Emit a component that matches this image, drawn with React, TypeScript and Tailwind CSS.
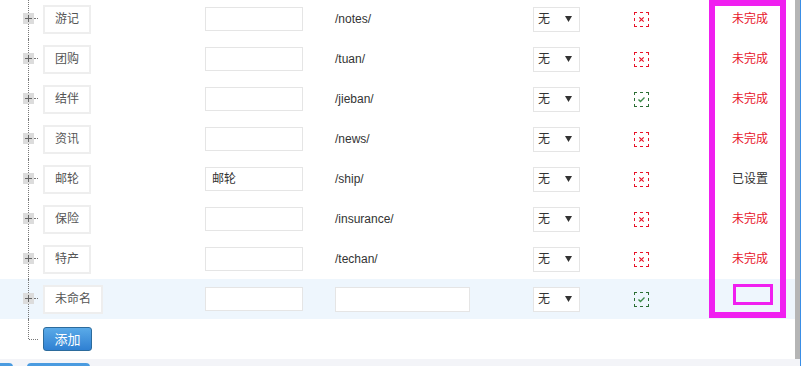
const rows = [
  { name: "游记", title: "", url: "/notes/", ok: false, status: "未完成" },
  { name: "团购", title: "", url: "/tuan/", ok: false, status: "未完成" },
  { name: "结伴", title: "", url: "/jieban/", ok: true, status: "未完成" },
  { name: "资讯", title: "", url: "/news/", ok: false, status: "未完成" },
  { name: "邮轮", title: "邮轮", url: "/ship/", ok: false, status: "已设置" },
  { name: "保险", title: "", url: "/insurance/", ok: false, status: "未完成" },
  { name: "特产", title: "", url: "/techan/", ok: false, status: "未完成" },
  { name: "未命名", title: "", url: null, ok: true, status: "" },
]

function PlusIcon() {
  return (
    <svg width="11" height="11" viewBox="0 0 11 11" className="block">
      <rect width="11" height="11" fill="#dcdcdc" />
      <path d="M2 5.5h7M5.5 2v7" stroke="#666" strokeWidth="1" />
    </svg>
  )
}

// dashed 15px box: corner pieces plus one dash in the middle of each side
const dashes =
  "M0 0.5h3M6 0.5h3M12 0.5h3M0 14.5h3M6 14.5h3M12 14.5h3" +
  "M0.5 0v3M0.5 6v3M0.5 12v3M14.5 0v3M14.5 6v3M14.5 12v3"

function Mark({ ok }: { ok: boolean }) {
  const c = ok ? "#2c6e35" : "#e8142a"
  return (
    <svg width="15" height="15" viewBox="0 0 15 15" className="block">
      <path d={dashes} stroke={c} strokeWidth="1" fill="none" />
      {ok ? (
        <path d="M4.5 7.5l2 2 4-4" fill="none" stroke="#3a8a48" strokeWidth="1.4" />
      ) : (
        <path d="M5.3 5.3l4.4 4.4M9.7 5.3l-4.4 4.4" stroke={c} strokeWidth="1.2" />
      )}
    </svg>
  )
}

function Select() {
  return (
    <div className="w-[47px] h-[25px] border border-[#e5e5e5] bg-white flex items-center justify-between pl-[4px] pr-[7px]">
      <span className="text-[12px] text-[#333]">无</span>
      <svg width="7" height="6" viewBox="0 0 7 6">
        <path d="M0 0h7L3.5 6z" fill="#333" />
      </svg>
    </div>
  )
}

function TreeCell({ last }: { last?: boolean }) {
  return (
    <div className="relative w-[43px] h-full shrink-0">
      <div
        className={
          "absolute left-[28px] top-0 w-0 border-l border-dotted border-[#777] " +
          (last ? "h-[20px]" : "h-full")
        }
      />
      {last ? (
        <div className="absolute left-[29px] top-[20px] w-[9px] border-t border-dotted border-[#777]" />
      ) : (
        <>
          <div className="absolute left-[34px] top-[19px] w-[4px] border-t border-dotted border-[#777]" />
          <div className="absolute left-[23px] top-[14px]">
            <PlusIcon />
          </div>
        </>
      )}
    </div>
  )
}

export default function App() {
  return (
    <div className="relative w-[801px] h-[366px] overflow-hidden flex bg-white font-['Liberation_Sans','Noto_Sans_CJK_SC',sans-serif]">
      <div className="w-[800px] flex flex-col">
        <div className="h-[359px] flex">
          <div className="w-[795px] bg-white overflow-hidden">
            <div className="-mt-px">
              {rows.map((r, i) => {
                const edit = r.url === null
                return (
                  <div key={i} className={"h-[40px] flex items-center " + (edit ? "bg-[#eef6fd]" : "")}>
                    <TreeCell />
                    <div className="w-[162px] shrink-0">
                      <div className="inline-flex h-[29px] items-center px-[10px] border-2 border-[#eeeeee] bg-white text-[12px] text-[#555]">
                        {r.name}
                      </div>
                    </div>
                    <div className="w-[130px] shrink-0">
                      <div className="w-[98px] h-[24px] border border-[#e5e5e5] bg-white flex items-center px-[6px] text-[12px] text-[#333]">
                        {r.title}
                      </div>
                    </div>
                    <div className="w-[198px] shrink-0 text-[12px] text-[#333]">
                      {edit ? (
                        <div className="w-[135px] h-[25px] border border-[#e5e5e5] bg-white" />
                      ) : (
                        r.url
                      )}
                    </div>
                    <div className="w-[101px] shrink-0">
                      <Select />
                    </div>
                    <div className="w-[81px] shrink-0">
                      <Mark ok={r.ok} />
                    </div>
                    <div
                      className={
                        "w-[70px] shrink-0 text-center text-[12px] " +
                        (r.status === "已设置" ? "text-[#333]" : "text-[#e8142a]")
                      }
                    >
                      {r.status}
                    </div>
                  </div>
                )
              })}
              <div className="h-[40px] flex items-center">
                <TreeCell last />
                <button className="w-[49px] h-[24px] rounded-[3px] border border-[#2c6b9c] bg-linear-to-b from-[#5aaae8] to-[#2f80d2] text-white text-[13px] leading-none">
                  添加
                </button>
              </div>
            </div>
          </div>
          <div className="w-[5px] bg-[#b5b5b5]" />
        </div>
        <div className="relative h-[7px] bg-[#f3f4f8] overflow-hidden">
          <div className="absolute left-0 top-[4px] w-[13px] h-[10px] rounded-tr-[4px] bg-[#4a9be0]" />
          <div className="absolute left-[27px] top-[4px] w-[63px] h-[10px] rounded-t-[4px] bg-[#4a9be0]" />
        </div>
      </div>
      <div className="w-px bg-[#3a8ee6]" />

      <div className="absolute left-[709px] top-0 w-[77px] h-[318px] border-[6px] border-[#f01ff0]" />
      <div className="absolute left-[733px] top-[284px] w-[40px] h-[21px] border-[3px] border-[#f01ff0]" />
    </div>
  )
}
